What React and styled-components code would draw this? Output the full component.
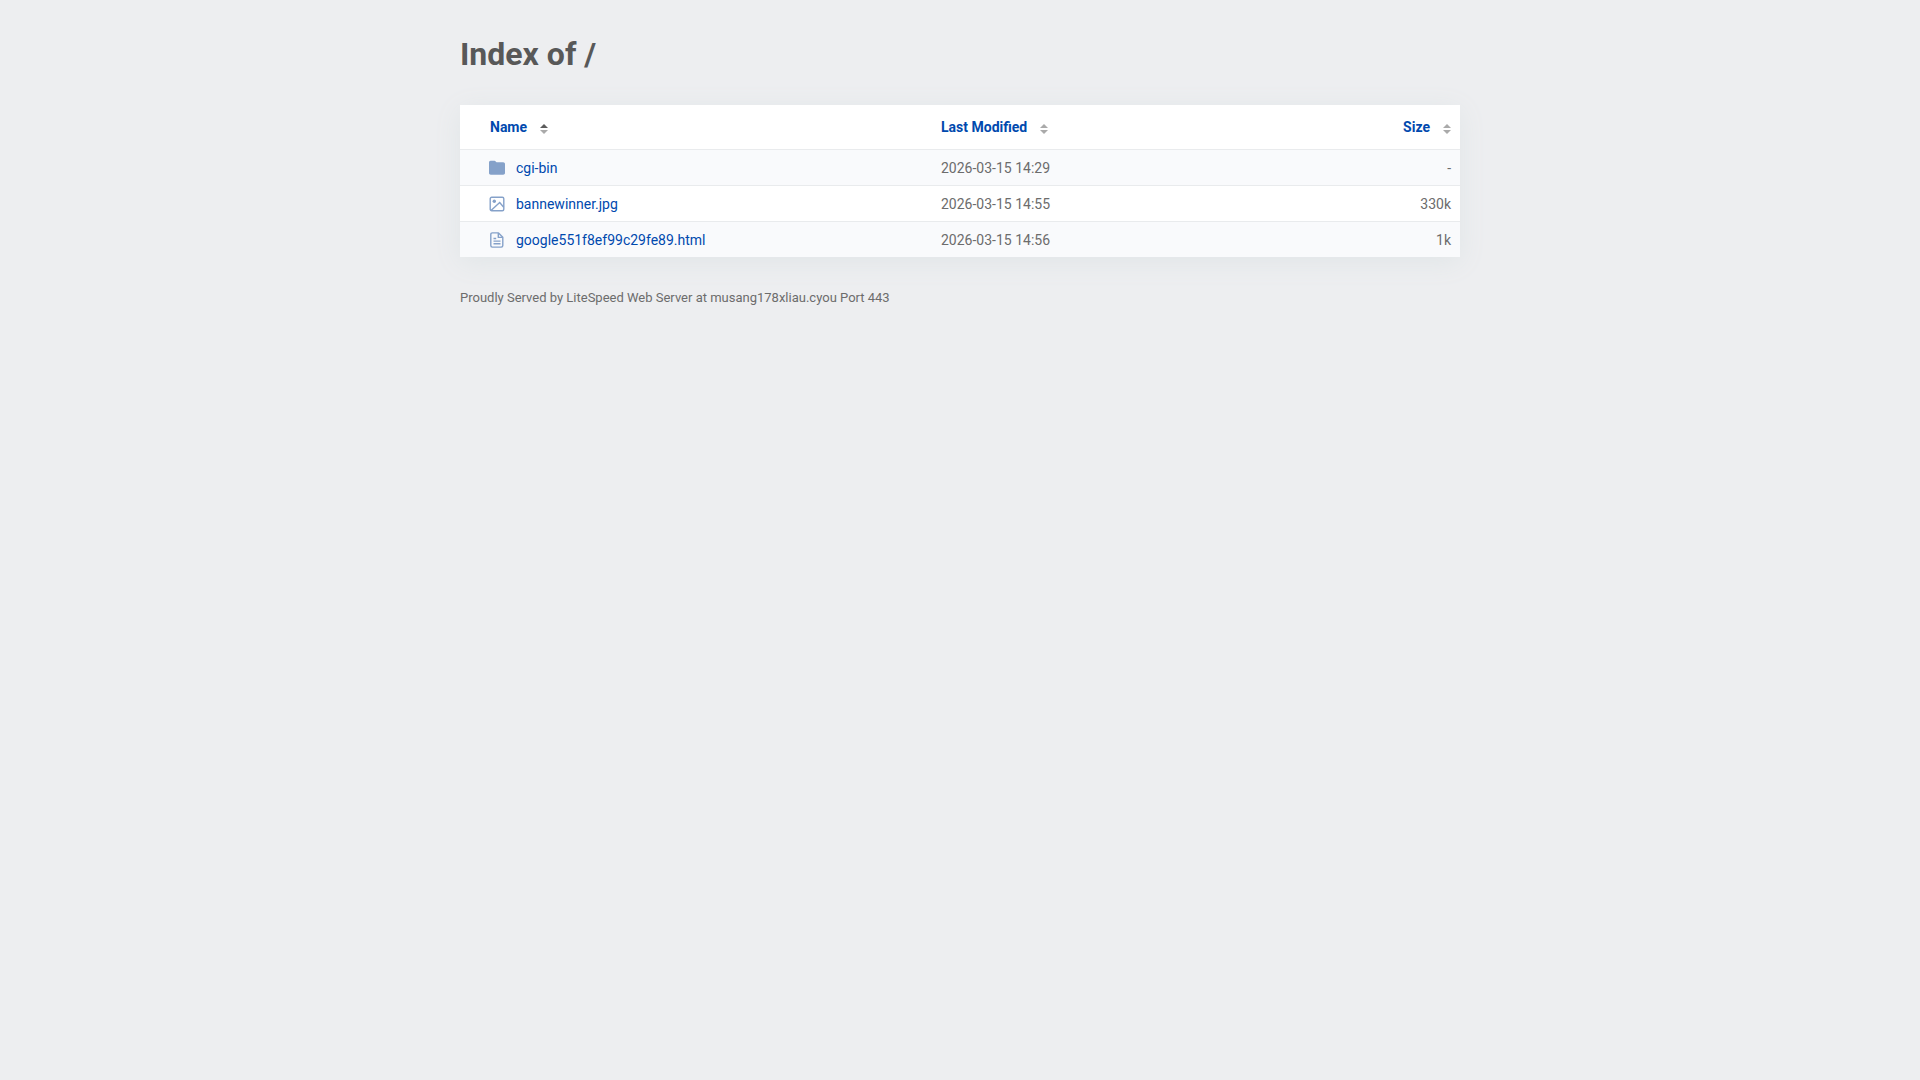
import React from "react";
import styled, { createGlobalStyle } from "styled-components";

const files = [
  { name: "cgi-bin", type: "folder", modified: "2026-03-15 14:29", size: "-" },
  {
    name: "bannewinner.jpg",
    type: "image",
    modified: "2026-03-15 14:55",
    size: "330k",
  },
  {
    name: "google551f8ef99c29fe89.html",
    type: "document",
    modified: "2026-03-15 14:56",
    size: "1k",
  },
];

const FileIcon = ({ type }) => {
  if (type === "folder") {
    return (
      <Icon viewBox="0 0 16 16" aria-hidden="true">
        <path
          fill="currentColor"
          d="M1.6.8h3.9c.5 0 .9.2 1.2.6l.8.9h6.7c1 0 1.8.7 1.8 1.700v9.100c0 1-.8 1.700-1.800 1.700H1.800C.8 14.800 0 14.100 0 13.100V2.500C0 1.500.7.8 1.600.8z"
        />
      </Icon>
    );
  }
  if (type === "image") {
    return (
      <Icon viewBox="0 0 16 16" aria-hidden="true">
        <g fill="none" stroke="currentColor" strokeWidth="1.4">
          <rect x="1.200" y="1.200" width="13.600" height="13.600" rx="1.500" />
          <path d="M2 14.500l8.700-7.900 4 4.600" />
        </g>
        <circle cx="5.300" cy="5.300" r="1.700" fill="currentColor" />
      </Icon>
    );
  }
  return (
    <Icon viewBox="0 0 16 16" aria-hidden="true">
      <g
        fill="none"
        stroke="currentColor"
        strokeWidth="1.400"
        strokeLinejoin="round"
      >
        <path d="M3.300.9h6.200l4.300 4.300v8.400c0 .9-.6 1.500-1.500 1.500h-9c-.9 0-1.500-.6-1.500-1.500V2.400c0-.9.6-1.500 1.500-1.500z" />
        <path d="M9.300 1v4.400h4.400M4.500 6.500h2.700M4.500 9.100h7M4.500 11.700h7" />
      </g>
    </Icon>
  );
};

const SortHeader = ({ label, ascending }) => (
  <SortButton type="button">
    {label}
    <SortIcon viewBox="0 0 8 10" aria-hidden="true">
      <path d="M0 4l4-4 4 4z" fill={ascending ? "#5c5c5c" : "#aaaaaa"} />
      <path d="M0 6l4 4 4-4z" fill="#aaaaaa" />
    </SortIcon>
  </SortButton>
);

const App = () => {
  return (
    <>
      <GlobalStyle />
      <Content>
        <Title>Index of /</Title>
        <FileTable>
          <thead>
            <tr>
              <NameHead aria-sort="ascending">
                <SortHeader label="Name" ascending />
              </NameHead>
              <Head>
                <SortHeader label="Last Modified" />
              </Head>
              <Head $right>
                <SortHeader label="Size" />
              </Head>
            </tr>
          </thead>
          <tbody>
            {files.map((file) => (
              <Row key={file.name}>
                <NameCell>
                  <FileLink href={`/${file.name}`}>
                    <FileIcon type={file.type} />
                    {file.name}
                  </FileLink>
                </NameCell>
                <Cell>{file.modified}</Cell>
                <Cell $right>{file.size}</Cell>
              </Row>
            ))}
          </tbody>
        </FileTable>
        <Footer>
          Proudly Served by LiteSpeed Web Server at musang178xliau.cyou Port 443
        </Footer>
      </Content>
    </>
  );
};

const GlobalStyle = createGlobalStyle`
  * {
    box-sizing: border-box;
  }
  body {
    margin: 0;
    background: #edeef0;
    color: #545454;
    font-family: Roboto, "Liberation Sans", sans-serif;
    font-size: 14px;
    line-height: 20px;
  }
`;

const Content = styled.main`
  max-width: 1000px;
  margin: 0 auto;
  padding: 32px 0;
`;

const Title = styled.h1`
  margin: 0 0 29px;
  color: #585858;
  font-size: 32px;
  line-height: 44px;
  font-weight: 700;
`;

const FileTable = styled.table`
  width: 100%;
  table-layout: fixed;
  border-spacing: 0;
  background: white;
  box-shadow: 0 5px 25px #e0e5e7;
`;

const Head = styled.th`
  height: 44px;
  padding: 0 9px;
  text-align: ${(props) => (props.$right ? "right" : "left")};
`;

const NameHead = styled(Head)`
  width: 47.2%;
  padding-left: 30px;
`;

const SortButton = styled.button`
  display: inline-flex;
  align-items: center;
  gap: 13px;
  padding: 0;
  border: none;
  background: none;
  color: #0049ae;
  font: inherit;
  cursor: pointer;
`;

const SortIcon = styled.svg`
  width: 8px;
  height: 10px;
  margin-top: 3px;
`;

const Row = styled.tr`
  &:nth-child(odd) {
    background: #f9fafc;
  }
`;

const Cell = styled.td`
  height: 36px;
  padding: 0 9px;
  border-top: 1px solid #e9ebed;
  color: #6c6c6c;
  text-align: ${(props) => (props.$right ? "right" : "left")};
`;

const NameCell = styled(Cell)`
  padding-left: 29px;
`;

const FileLink = styled.a`
  display: flex;
  align-items: center;
  gap: 11px;
  color: #0049ae;
  text-decoration: none;
  &:hover {
    text-decoration: underline;
  }
`;

const Icon = styled.svg`
  width: 16px;
  height: 16px;
  color: #85a1c9;
`;

const Footer = styled.footer`
  margin-top: 31px;
  color: #6c6c6c;
  font-size: 13px;
`;

export default App;
